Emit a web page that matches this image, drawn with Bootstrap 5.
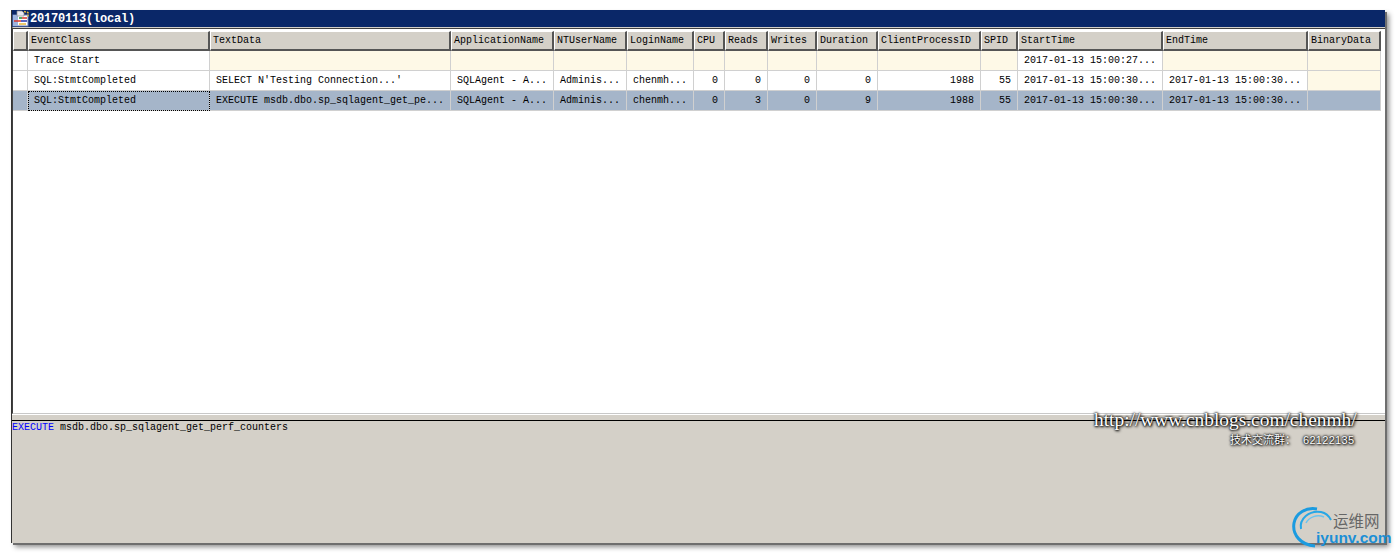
<!DOCTYPE html>
<html lang="en">
<head>
<meta charset="utf-8">
<title>20170113 (local)</title>
<link href="https://cdn.jsdelivr.net/npm/bootstrap@5.3.0/dist/css/bootstrap.min.css" rel="stylesheet">
<style>
html,body{height:100%;background:#fff;overflow:hidden}
body{padding:10px 11px 11px 11px;font-family:"Liberation Mono",monospace;font-size:10px;color:#000;position:relative}
.trace-win{height:533px;background:#d4d0c8;box-shadow:2px 2px 0 #6e6e6e,4px 4px 5px rgba(0,0,0,.45);border-left:1px solid #333}
.trace-title{height:17px;background:#0a2768;color:#fff;font-weight:700;font-size:12px;letter-spacing:-.2px;line-height:16px;gap:1px}
.trace-title svg{display:block;flex:none}
.trace-grid{height:387px;background:#fff;border-top:1px solid #d4d0c8;border-left:1px solid #404040;border-bottom:1px solid #c8c8c8;box-shadow:inset 0 1px 0 #404040;padding-top:3px}
.trace-table{table-layout:fixed;width:1368px;border-collapse:separate;border-spacing:0;margin:0;font-size:10px;line-height:12px;color:#000}
.trace-table th,.trace-table td{padding:0;height:20px;white-space:nowrap;overflow:hidden;vertical-align:middle;font-weight:400;background:#fff;color:#000;box-shadow:none;border:0;border-right:1px solid #d0d0d0;border-bottom:1px solid #d0d0d0}
.trace-table thead th{background:#d4d0c8;padding:1px 0 0 2px;border-top:1px solid #fff;border-left:1px solid #fff;border-right:2px solid #555;border-bottom:2px solid #555}
.trace-table td{padding:0 5px 0 6px}
.trace-table td.num{text-align:right;padding-right:6px}
.trace-table td.cream{background:#fef9e7}
.trace-table tr.row-sel td{background:#a5b5c9}
.trace-table tr.row-sel td.cell-focus{outline:1px dotted #000;outline-offset:-1px}
.w0{width:15px}.w1{width:182px}.w2{width:241px}.w3{width:103px}.w4{width:73px}.w5{width:67px}.w6{width:31px}.w7{width:43px}.w8{width:49px}.w9{width:61px}.w10{width:103px}.w11{width:37px}.w12{width:145px}.w13{width:145px}.w14{width:73px}
.trace-split{height:7px;background:#d4d0c8;border-top:1px solid #fff;border-bottom:1px solid #000}
.trace-sql{flex:1;background:#d4d0c8;line-height:12px;padding:1px 0 0 0}
.kw{color:#0000ff}
.wm{position:absolute;color:#fff;white-space:nowrap;text-shadow:0 0 3px #000,1px 1px 3px #000,0 0 2px #000}
.wm-url{left:1094px;top:408px;font-family:"Liberation Serif",serif;font-size:19.4px;line-height:24px}
.wm-qq{left:1230px;top:433px;font-family:"Liberation Sans","Noto Sans CJK SC",sans-serif;font-size:11px;line-height:15px}
.wm-num{margin-left:7px;letter-spacing:.3px}
.logo-arcs{position:absolute;left:1291px;top:505px}
.logo-cn{position:absolute;left:1333px;top:510px;font-family:"Noto Sans CJK SC",sans-serif;font-size:15.5px;line-height:20px;color:#666}
.logo-en{position:absolute;left:1316px;top:529px;font-family:"Liberation Sans",sans-serif;font-weight:700;font-size:15.5px;line-height:18px;color:#1b8fd6}
</style>
</head>
<body>
<div class="trace-win d-flex flex-column">
  <div class="trace-title d-flex align-items-center">
    <svg width="17" height="17" viewBox="0 0 17 17"><rect x="1" y="5" width="15" height="11" fill="#fff" stroke="#6a7fb0"/><rect x="1" y="5" width="5" height="11" fill="#9db4de"/><path d="M5 1h5l2 2v3H5z" fill="#e8e8f0" stroke="#8a8a8a" stroke-width=".7"/><path d="M12 1.500l4 1v4" fill="none" stroke="#e8b83a" stroke-width="1.400" stroke-dasharray="2 1"/><path d="M7 8h3" stroke="#1f8a2c" stroke-width="1.500"/><path d="M10 8h5" stroke="#d9352a" stroke-width="1.500"/><path d="M2 11h7" stroke="#d9352a" stroke-width="1.500"/><path d="M9 11h6" stroke="#2233aa" stroke-width="1.500"/><path d="M7 14h7" stroke="#e8b83a" stroke-width="1.500"/></svg>
    <span>20170113(local)</span>
  </div>
  <div class="trace-grid">
    <table class="table trace-table">
      <thead>
        <tr>
          <th class="w0"></th><th class="w1">EventClass</th><th class="w2">TextData</th><th class="w3">ApplicationName</th><th class="w4">NTUserName</th><th class="w5">LoginName</th><th class="w6">CPU</th><th class="w7">Reads</th><th class="w8">Writes</th><th class="w9">Duration</th><th class="w10">ClientProcessID</th><th class="w11">SPID</th><th class="w12">StartTime</th><th class="w13">EndTime</th><th class="w14">BinaryData</th>
        </tr>
      </thead>
      <tbody>
        <tr>
          <td></td><td>Trace Start</td><td class="cream"></td><td class="cream"></td><td class="cream"></td><td class="cream"></td><td class="cream"></td><td class="cream"></td><td class="cream"></td><td class="cream"></td><td class="cream"></td><td class="cream"></td><td>2017-01-13 15:00:27...</td><td class="cream"></td><td class="cream"></td>
        </tr>
        <tr>
          <td></td><td>SQL:StmtCompleted</td><td>SELECT N'Testing Connection...'</td><td>SQLAgent - A...</td><td>Adminis...</td><td>chenmh...</td><td class="num">0</td><td class="num">0</td><td class="num">0</td><td class="num">0</td><td class="num">1988</td><td class="num">55</td><td>2017-01-13 15:00:30...</td><td>2017-01-13 15:00:30...</td><td class="cream"></td>
        </tr>
        <tr class="row-sel">
          <td></td><td class="cell-focus">SQL:StmtCompleted</td><td>EXECUTE msdb.dbo.sp_sqlagent_get_pe...</td><td>SQLAgent - A...</td><td>Adminis...</td><td>chenmh...</td><td class="num">0</td><td class="num">3</td><td class="num">0</td><td class="num">9</td><td class="num">1988</td><td class="num">55</td><td>2017-01-13 15:00:30...</td><td>2017-01-13 15:00:30...</td><td></td>
        </tr>
      </tbody>
    </table>
  </div>
  <div class="trace-split"></div>
  <div class="trace-sql"><span class="kw">EXECUTE</span> msdb.dbo.sp_sqlagent_get_perf_counters</div>
</div>
<div class="wm wm-url">http://www.cnblogs.com/chenmh/</div>
<div class="wm wm-qq">技术交流群：<span class="wm-num">62122135</span></div>
<svg class="logo-arcs" width="44" height="44" viewBox="0 0 44 44" fill="none"><path d="M24 41C10 40 1 30 3 18 5 8 15 2 26 4" stroke="#1b9be0" stroke-width="3"/><path d="M10 24C8 14 18 5 30 7c5 1 8 4 10 8" stroke="#27a7e6" stroke-width="2"/><path d="M15 18c3-6 11-9 18-6" stroke="#6cc4ef" stroke-width="1.500"/></svg>
<div class="logo-cn">运维网</div>
<div class="logo-en">iyunv.com</div>
</body>
</html>
